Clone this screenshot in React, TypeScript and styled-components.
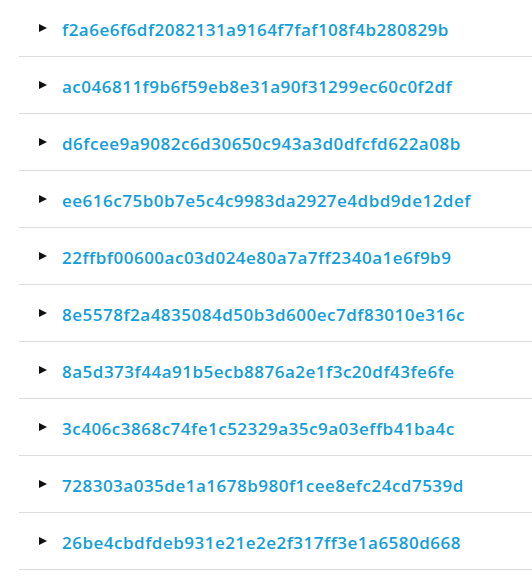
import React from "react";
import styled, { createGlobalStyle } from "styled-components";

const GlobalStyle = createGlobalStyle`
  html, body {
    margin: 0;
    padding: 0;
    background: #ffffff;
  }
`;

const hashes = [
  "f2a6e6f6df2082131a9164f7faf108f4b280829b",
  "ac046811f9b6f59eb8e31a90f31299ec60c0f2df",
  "d6fcee9a9082c6d30650c943a3d0dfcfd622a08b",
  "ee616c75b0b7e5c4c9983da2927e4dbd9de12def",
  "22ffbf00600ac03d024e80a7a7ff2340a1e6f9b9",
  "8e5578f2a4835084d50b3d600ec7df83010e316c",
  "8a5d373f44a91b5ecb8876a2e1f3c20df43fe6fe",
  "3c406c3868c74fe1c52329a35c9a03effb41ba4c",
  "728303a035de1a1678b980f1cee8efc24cd7539d",
  "26be4cbdfdeb931e21e2e2f317ff3e1a6580d668",
];

const List = styled.ul`
  list-style: none;
  margin: 0;
  padding: 0 0 0 19px;
`;

const Row = styled.li`
  display: flex;
  align-items: center;
  box-sizing: border-box;
  height: 57px;
  padding: 3px 0 0 20px;
  border-bottom: 1px solid #dcdcdc;
`;

const Caret = styled.span`
  width: 0;
  height: 0;
  border-top: 4px solid transparent;
  border-bottom: 4px solid transparent;
  border-left: 8px solid #111111;
  margin-top: -4px;
  margin-right: 15px;
`;

const Hash = styled.a`
  font-family: "Open Sans", "Liberation Sans", sans-serif;
  font-size: 17px;
  font-weight: 600;
  letter-spacing: 0.5px;
  color: #139ed8;
  text-decoration: none;
  cursor: pointer;
`;

export default function App() {
  return (
    <>
      <GlobalStyle />
      <List>
        {hashes.map((hash) => (
          <Row key={hash}>
            <Caret />
            <Hash>{hash}</Hash>
          </Row>
        ))}
      </List>
    </>
  );
}
